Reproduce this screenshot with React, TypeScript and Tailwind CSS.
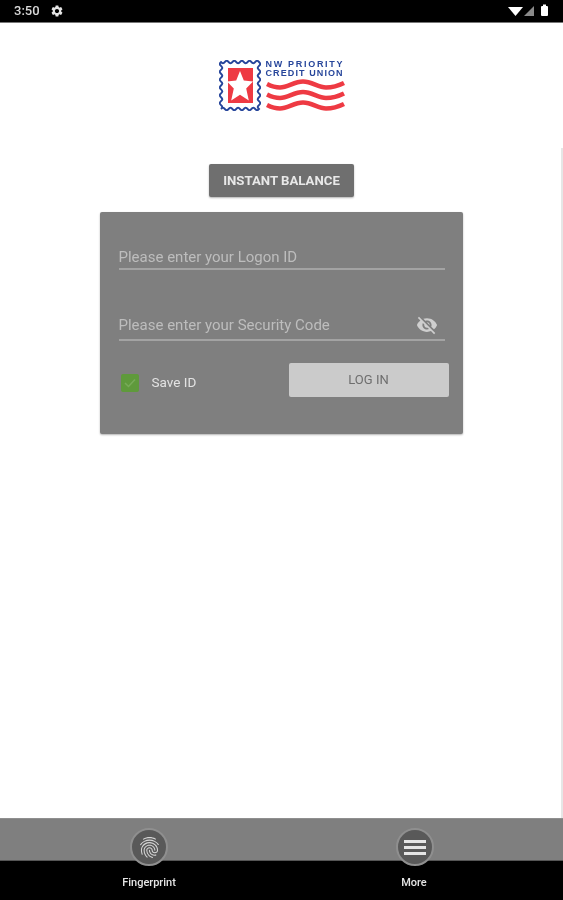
import React from "react";
import { MdSettings, MdVisibilityOff, MdFingerprint } from "react-icons/md";

function stampPath() {
  const x0 = 2, y0 = 2, x1 = 40, y1 = 49;
  const amp = 1.3;
  const nx = 5, ny = 6;
  const pts: string[] = [];
  const side = (ax: number, ay: number, bx: number, by: number, n: number, nxDir: number, nyDir: number) => {
    const steps = n * 8;
    for (let i = 0; i < steps; i++) {
      const t = i / steps;
      const s = Math.sin(t * n * Math.PI * 2) * amp;
      pts.push(`${(ax + (bx - ax) * t + nxDir * s).toFixed(2)} ${(ay + (by - ay) * t + nyDir * s).toFixed(2)}`);
    }
  };
  side(x0, y0, x1, y0, nx, 0, 1);
  side(x1, y0, x1, y1, ny, 1, 0);
  side(x1, y1, x0, y1, nx, 0, 1);
  side(x0, y1, x0, y0, ny, 1, 0);
  return "M" + pts.join("L") + "Z";
}

function Logo() {
  const waves = [0, 10.5, 21];
  return (
    <div className="flex items-start gap-[5px]">
      <svg width="42" height="51" viewBox="0 0 42 51">
        <path d={stampPath()} fill="#fff" stroke="#27469b" strokeWidth="1.9" />
        <rect x="9" y="8" width="25" height="35" fill="#ee3a43" />
        <polygon points="21,11 24.8,20.5 34,21.5 27.2,28.5 29.8,40.5 21,34.8 12.2,40.5 14.8,28.5 8,21.5 17.2,20.5" fill="#fff" />
      </svg>
      <div className="flex flex-col w-[79px]">
        <div className="text-[9px] leading-[9px] font-bold text-[#27469b] whitespace-nowrap tracking-[1.7px] [font-family:'Liberation_Sans',sans-serif]">NW PRIORITY</div>
        <div className="text-[9px] leading-[9px] font-bold text-[#27469b] whitespace-nowrap tracking-[1.1px] [font-family:'Liberation_Sans',sans-serif]">CREDIT UNION</div>
        <svg width="79" height="34" viewBox="0 0 79 34">
          {waves.map((dy) => (
            <path
              key={dy}
              transform={`translate(0 ${dy})`}
              d="M1 6 C5 8 9 9.5 14 9.5 C22 9.5 28 3.5 37 3.5 C46 3.5 52 9.5 60 9.5 C66 9.5 72 8 78 5"
              fill="none"
              stroke="#ee3a43"
              strokeWidth="4.6"
            />
          ))}
        </svg>
      </div>
    </div>
  );
}

function NavItem({ label, circleClass, children }: { label: string; circleClass: string; children: React.ReactNode }) {
  return (
    <div className="flex flex-col items-center w-[120px]">
      <div className={`w-[38px] h-[38px] rounded-full bg-[#595959] border-2 border-[#8f8f8f] flex items-center justify-center ${circleClass}`}>
        {children}
      </div>
      <span className="mt-[10px] text-[11px] leading-[13px] font-medium text-[#e5e5e5]">{label}</span>
    </div>
  );
}

export default function App() {
  return (
    <div className="relative w-[563px] h-[900px] flex flex-col bg-white overflow-hidden blur-[0.6px] [font-family:Roboto,sans-serif]">
      <div className="h-[23px] bg-black flex items-center justify-between pl-[14px] pr-[13px] text-[#d9d9d9] border-b border-[#777]">
        <div className="flex items-center gap-[10px]">
          <span className="text-[13px] font-medium">3:50</span>
          <MdSettings size={14} className="text-[#e5e5e5]" />
        </div>
        <svg width="42" height="14" viewBox="0 0 42 14">
          <polygon points="0,3 15,3 7.5,12" fill="#fff" />
          <polygon points="26,2 26,12 16,12" fill="#8a8a8a" />
          <rect x="33" y="2" width="7" height="10" rx="1" fill="#fff" />
          <rect x="35" y="0.5" width="3" height="2" fill="#fff" />
        </svg>
      </div>

      <div className="h-[125px] flex justify-center pt-[37px]">
        <Logo />
      </div>

      <div className="flex-1 flex flex-col items-center pt-[16px] border-r-2 border-[#e6e6e6]">
        <button className="ml-[2px] w-[145px] h-[33px] bg-[#6f6f6f] rounded-[2px] shadow-[0_1px_2px_rgba(0,0,0,0.3)] text-[13.2px] font-bold text-[#e8e8e8]">
          INSTANT BALANCE
        </button>
        <div className="mt-[15px] ml-[1px] w-[363px] h-[222px] bg-[#7f7f7f] rounded-[2px] shadow-[0_1px_2px_rgba(0,0,0,0.3)] pl-[19px] pr-[14px] pt-[35px] flex flex-col">
          <div className="pr-[4px] flex flex-col">
            <div className="h-[23px] border-b-2 border-[#a3a3a3]">
              <span className="block text-[15px] leading-[20px] text-[#bdbdbd]">Please enter your Logon ID</span>
            </div>
            <div className="mt-[45px] h-[26px] border-b-2 border-[#a3a3a3] flex items-start justify-between">
              <span className="text-[15px] leading-[20px] text-[#bdbdbd]">Please enter your Security Code</span>
              <MdVisibilityOff size={22} className="text-[#cfcfcf] mr-[7px] -mt-[1px]" />
            </div>
          </div>
          <div className="mt-[22px] flex items-start justify-between">
            <div className="flex items-center gap-[13px] pl-[2px] pt-[10px]">
              <div className="w-[18px] h-[18px] rounded-[2px] bg-[#5f9a3c] flex items-center justify-center">
                <svg width="14" height="14" viewBox="0 0 14 14">
                  <path d="M2 7 L5.5 10.5 L12 3.5" fill="none" stroke="#78ab59" strokeWidth="1.5" />
                </svg>
              </div>
              <span className="text-[13.5px] text-[#e3e3e3] -mt-[1px]">Save ID</span>
            </div>
            <button className="w-[160px] h-[34px] bg-[#cbcbcb] rounded-[2px] text-[13px] text-[#6e6e6e]">LOG IN</button>
          </div>
        </div>
      </div>

      <div className="relative h-[82px] flex flex-col">
        <div className="h-[42px] bg-[#7f7f7f] border-t border-[#8f8f8f]" />
        <div className="h-[40px] bg-black border-t border-[#555]" />
        <div className="absolute left-0 right-0 top-[10px] flex justify-between pl-[89px] pr-[89px]">
          <NavItem label="Fingerprint" circleClass="">
            <MdFingerprint size={25} className="text-[#d6d6d6]" />
          </NavItem>
          <NavItem label="More" circleClass="ml-[2px]">
            <div className="flex flex-col gap-[3px]">
              <div className="w-[22px] h-[3px] bg-[#e5e5e5]" />
              <div className="w-[22px] h-[3px] bg-[#e5e5e5]" />
              <div className="w-[22px] h-[3px] bg-[#e5e5e5]" />
            </div>
          </NavItem>
        </div>
      </div>
    </div>
  );
}
